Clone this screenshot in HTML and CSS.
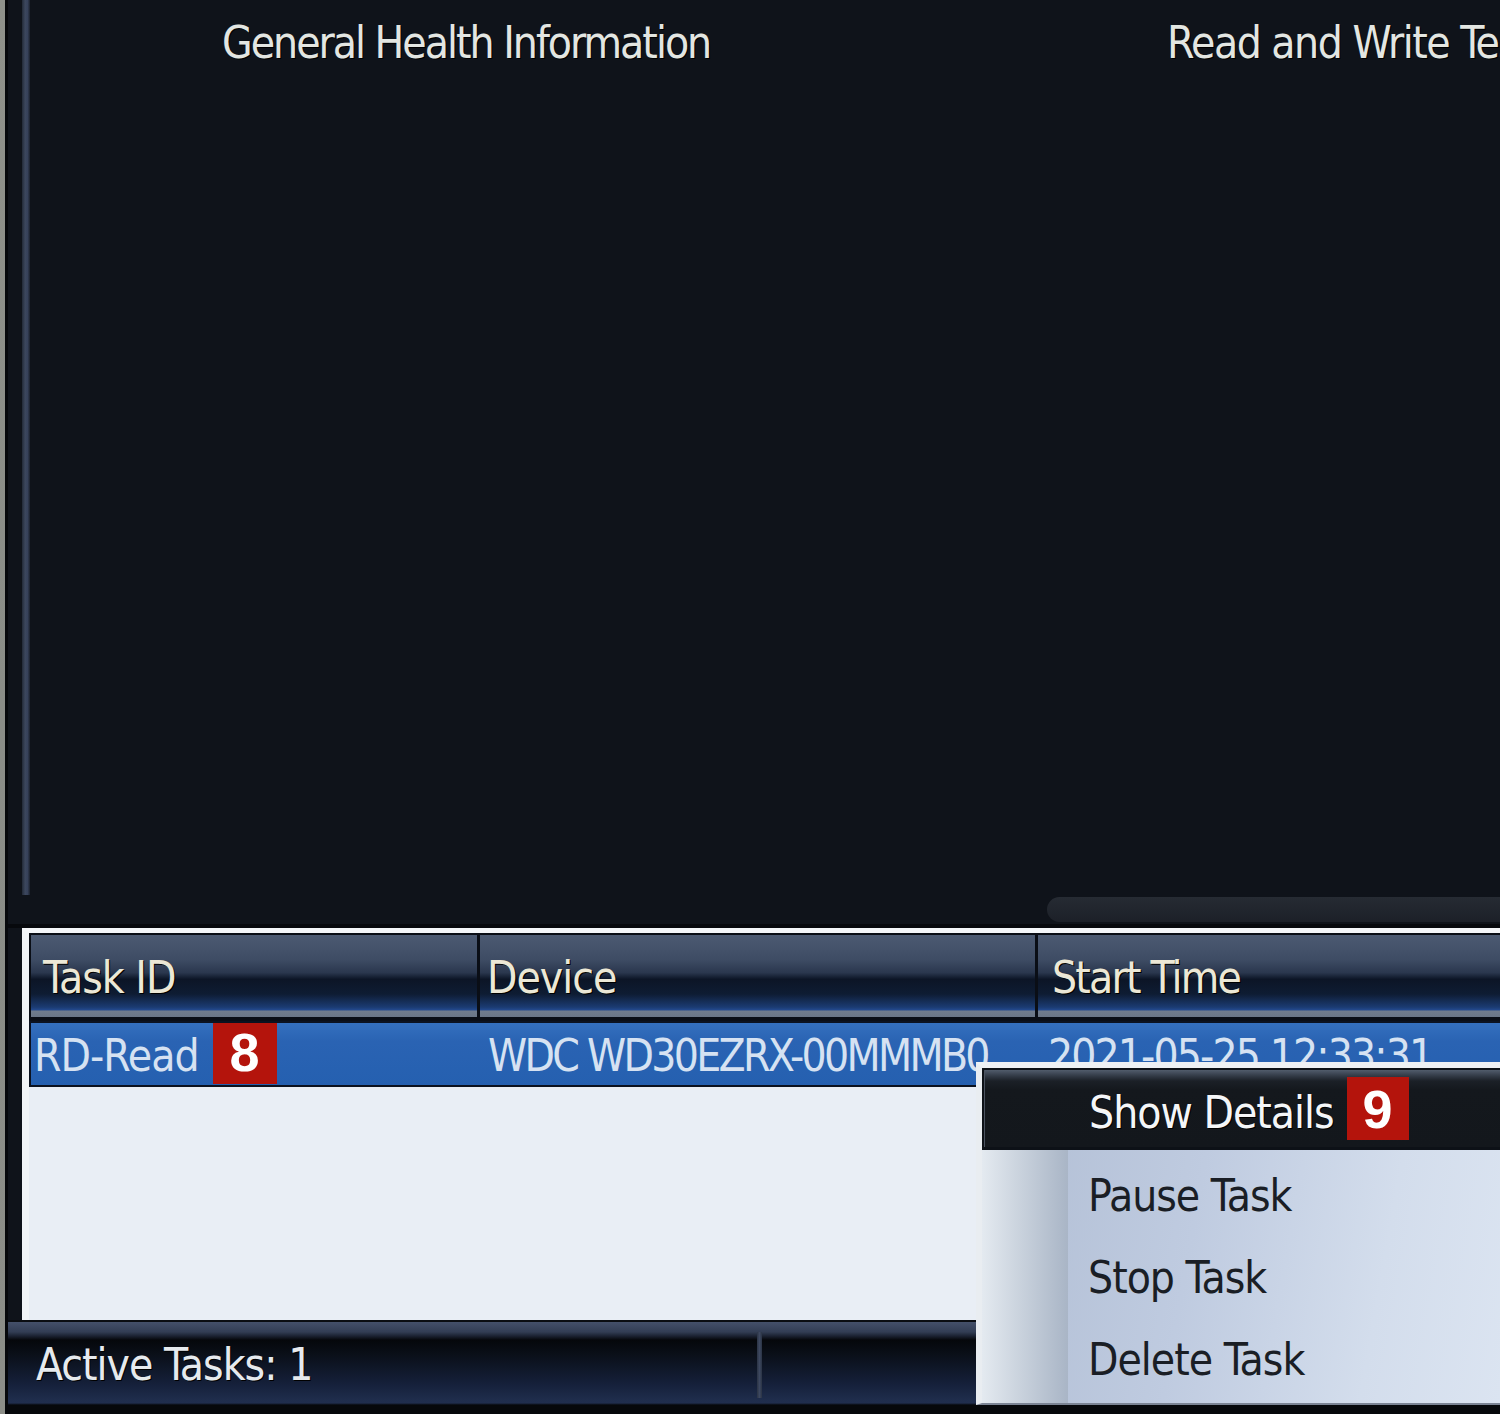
FILE: index.html
```html
<!DOCTYPE html>
<html lang="en">
<head>
<meta charset="utf-8">
<title>Tasks</title>
<link rel="stylesheet" href="styles.css">
</head>
<body>
<div class="app">
  <div class="edge"></div>
  <div class="main">
    <div class="upper">
      <div class="rail"></div>
      <div class="upper-body">
        <div class="titles">
          <div class="title t1">General Health Information</div>
          <div class="title t2">Read and Write Tests</div>
        </div>
        <div class="scrolltrack"></div>
      </div>
    </div>
    <div class="tasks">
      <div class="thead">
        <div class="th c1">Task ID</div>
        <div class="th c2">Device</div>
        <div class="th c3">Start Time</div>
      </div>
      <div class="row">
        <div class="td c1"><span>RD-Read</span><span class="badge">8</span></div>
        <div class="td c2">WDC WD30EZRX-00MMMB0</div>
        <div class="td c3">2021-05-25 12:33:31</div>
      </div>
      <div class="tbody-empty"></div>
    </div>
    <div class="status">
      <div class="scell">Active Tasks: 1</div>
      <div class="ssep"></div>
      <div class="scell grow"></div>
    </div>
  </div>
  <div class="ctx">
    <div class="ctx-item hl"><span class="hl-text">Show Details</span><span class="badge b9">9</span></div>
    <div class="ctx-list">
      <div class="ctx-item">Pause Task</div>
      <div class="ctx-item">Stop Task</div>
      <div class="ctx-item">Delete Task</div>
    </div>
  </div>
</div>
</body>
</html>
```

FILE: styles.css
```css
html, body {
  margin: 0;
  padding: 0;
}
body {
  width: 1500px;
  height: 1414px;
  overflow: hidden;
  background: #0e1219;
  font-family: "DejaVu Sans Condensed", "DejaVu Sans", sans-serif;
  font-stretch: condensed;
  font-size: 44px;
  line-height: 48px;
  letter-spacing: -1px;
}
.app {
  position: relative;
  display: flex;
  width: 1500px;
  height: 1414px;
}
.edge {
  width: 5px;
  background: linear-gradient(to bottom, #8f918a, #8a8d87 50%, #8c8e88);
  border-right: 3px solid #06080b;
}
.main {
  flex: 1;
  min-width: 0;
  display: flex;
  flex-direction: column;
  overflow: hidden;
  background: #0f131a;
}

/* upper dark area */
.upper {
  height: 928px;
  display: flex;
  padding-left: 14px;
  box-sizing: border-box;
  border-bottom: 4px solid #07090d;
}
.rail {
  width: 8px;
  height: 895px;
  background: linear-gradient(to right, #222a37, #3c475d 40%, #36415a 70%, #1b212c);
}
.upper-body {
  flex: 1;
  min-width: 0;
  display: flex;
  flex-direction: column;
}
.titles {
  display: flex;
  padding-top: 19px;
  padding-left: 192px;
  white-space: nowrap;
  color: #e3e6e2;
  letter-spacing: -2px;
  text-shadow: 1px 1px 0 #000000;
}
.t1 {
  flex: 0 0 945px;
}
.t2 {
  letter-spacing: -1.5px;
}
.scrolltrack {
  margin-top: auto;
  margin-left: 1017px;
  margin-bottom: 2px;
  height: 25px;
  border-radius: 13px 0 0 13px;
  background: linear-gradient(to bottom, #262b33, #1c2028);
}

/* tasks table */
.tasks {
  margin-left: 14px;
  height: 392px;
  box-sizing: border-box;
  display: flex;
  flex-direction: column;
  background: #e9eef5;
  border-top: 5px solid #f4f6f9;
  border-left: 7px solid #f2f5f8;
}
.thead {
  display: grid;
  grid-template-columns: 449px 558px 1fr;
  height: 88px;
  box-sizing: border-box;
  border-top: 2px solid #0a0e16;
  border-left: 2px solid #0a0e16;
  border-bottom: 4px solid #0a0e16;
  background: linear-gradient(to bottom,
    #4c5a72 0%, #3e4c64 30%, #2a374e 46%, #0c1526 54%,
    #0e1c33 72%, #1b3b72 88%, #22478a 91%, #707c8d 93%, #6a7687 100%);
}
.th {
  display: flex;
  align-items: center;
  padding-top: 4px;
  color: #ece8d6;
  white-space: nowrap;
  overflow: hidden;
  text-shadow: 1px 1px 0 #000000;
}
.th.c1 { padding-left: 12px; border-right: 3px solid #0a0e16; }
.th.c2 { padding-left: 7px; border-right: 3px solid #0a0e16; }
.th.c3 { padding-left: 14px; letter-spacing: -1.8px; }

.row {
  display: grid;
  grid-template-columns: 449px 558px 1fr;
  height: 66px;
  box-sizing: border-box;
  border: 2px solid #0b1220;
  border-right: none;
  background: linear-gradient(to bottom, #3470be, #2a63b3 30%, #2560b0);
  color: #d6e2f2;
  white-space: nowrap;
}
.td {
  display: flex;
  align-items: center;
  overflow: hidden;
  padding-top: 4px;
}
.td.c1 { padding-left: 3px; }
.td.c2 { padding-left: 8px; letter-spacing: -2.7px; }
.td.c3 { padding-left: 10px; letter-spacing: -1.9px; }

.badge {
  display: flex;
  align-items: center;
  justify-content: center;
  background: #b4140c;
  color: #ffffff;
  font-family: "Liberation Sans", "DejaVu Sans", sans-serif;
  font-weight: bold;
  font-size: 54px;
  letter-spacing: 0;
}
.td .badge {
  width: 64px;
  height: 64px;
  margin-left: 14px;
  margin-top: -8px;
}
.tbody-empty {
  flex: 1;
}

/* status bar */
.status {
  flex: 1;
  display: flex;
  box-sizing: border-box;
  border-top: 2px solid #0a0d12;
  background: linear-gradient(to bottom,
    #44506a 0px, #323d54 10px, #1b2232 14px, #05070b 18px,
    #0a0f18 32px, #15203a 62px, #1f2d4c 78px, #202e4e 81px, #06080b 83px, #06080b 100%);
  color: #e6eaee;
  text-shadow: 1px 1px 0 #000000;
}
.scell {
  padding-top: 19px;
  padding-left: 28px;
  width: 721px;
  white-space: nowrap;
}
.scell.grow {
  flex: 1;
  width: auto;
}
.ssep {
  width: 5px;
  margin-top: 10px;
  height: 66px;
  background: linear-gradient(to right, #2a3344, #3d4860, #2a3344);
}

/* context menu */
.ctx {
  position: absolute;
  left: 976px;
  top: 1062px;
  width: 524px;
  height: 343px;
  box-sizing: border-box;
  display: flex;
  flex-direction: column;
  background: #0d1117;
  border-top: 6px solid #eef1f4;
  border-left: 6px solid #e9edf1;
  border-bottom: 2px solid #7b8494;
  padding-top: 2px;
}
.ctx-item {
  display: flex;
  align-items: center;
  height: 82px;
  padding-left: 106px;
  box-sizing: border-box;
  color: #1a1e25;
  white-space: nowrap;
  padding-top: 6px;
}
.ctx-item.hl {
  height: 77px;
  margin-left: 2px;
  padding-left: 104px;
  padding-top: 0;
  color: #f4f6f8;
  border-left: 1px solid #4b5360;
  text-shadow: 1px 1px 0 #000000;
  background: linear-gradient(to bottom, #515c6c 0px, #323a46 6px, #1b2027 11px, #14181d 20px, #13171c 100%);
}
.hl-text {
  padding-top: 8px;
}
.b9 {
  width: 62px;
  height: 63px;
  margin-left: 13px;
  text-shadow: none;
}
.ctx-list {
  flex: 1;
  margin-top: 3px;
  padding-top: 2px;
  background:
    linear-gradient(to right, #e4eaf0 0px, #c8d1dc 40px, #a9b5c6 86px, rgba(0,0,0,0) 86px),
    linear-gradient(100deg, #b1bed4 0%, #bfcbe0 40%, #d3ddec 75%, #dbe4f1 100%);
}
```
